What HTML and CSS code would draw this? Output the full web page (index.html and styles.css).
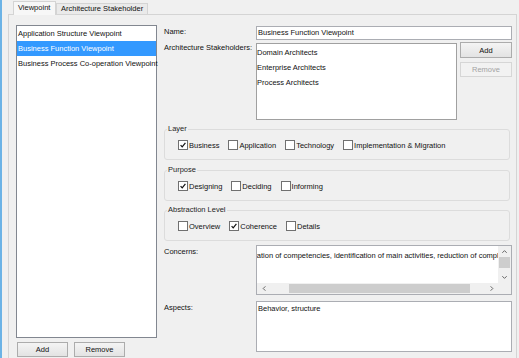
FILE: index.html
```html
<!DOCTYPE html>
<html lang="en">
<head>
  <meta charset="UTF-8" />
  <title>Viewpoints</title>
  <link rel="stylesheet" href="styles.css">
</head>
<body>
  <div class="frame">
    <div class="tabbar">
      <div class="tab active">Viewpoint</div>
      <div class="tab">Architecture Stakeholder</div>
    </div>
    <div class="panel">
      <div class="left">
        <div class="listbox vp-list">
          <div class="item">Application Structure Viewpoint</div>
          <div class="item selected">Business Function Viewpoint</div>
          <div class="item">Business Process Co-operation Viewpoint</div>
        </div>
        <div class="btn-row">
          <button class="btn">Add</button>
          <button class="btn">Remove</button>
        </div>
      </div>

      <div class="right">
        <div class="row name-row">
          <label class="lbl">Name:</label>
          <div class="field">Business Function Viewpoint</div>
        </div>

        <div class="row stake-row">
          <label class="lbl">Architecture Stakeholders:</label>
          <div class="listbox stake-list">
            <div class="item">Domain Architects</div>
            <div class="item">Enterprise Architects</div>
            <div class="item">Process Architects</div>
          </div>
          <div class="side-btns">
            <button class="btn add">Add</button>
            <button class="btn" disabled>Remove</button>
          </div>
        </div>

        <fieldset class="group">
          <legend>Layer</legend>
          <div class="checks">
            <span class="check"><span class="box on"><svg viewBox="0 0 10 10"><path d="M2 5.2 L4 7.4 L8 2.4"/></svg></span>Business</span>
            <span class="check"><span class="box"></span>Application</span>
            <span class="check"><span class="box"></span>Technology</span>
            <span class="check"><span class="box"></span>Implementation &amp; Migration</span>
          </div>
        </fieldset>

        <fieldset class="group purpose">
          <legend>Purpose</legend>
          <div class="checks">
            <span class="check"><span class="box on"><svg viewBox="0 0 10 10"><path d="M2 5.2 L4 7.4 L8 2.4"/></svg></span>Designing</span>
            <span class="check"><span class="box"></span>Deciding</span>
            <span class="check"><span class="box"></span>Informing</span>
          </div>
        </fieldset>

        <fieldset class="group abstraction">
          <legend>Abstraction Level</legend>
          <div class="checks">
            <span class="check"><span class="box"></span>Overview</span>
            <span class="check"><span class="box on"><svg viewBox="0 0 10 10"><path d="M2 5.2 L4 7.4 L8 2.4"/></svg></span>Coherence</span>
            <span class="check"><span class="box"></span>Details</span>
          </div>
        </fieldset>

        <div class="row concerns-row">
          <label class="lbl">Concerns:</label>
          <div class="textbox scrolled">
            <div class="text-clip"><div class="long-text">Identification of competencies, identification of main activities, reduction of complexity</div></div>
            <div class="vscroll">
              <span class="arrow"><svg viewBox="0 0 8 8"><path d="M1.5 5.5 L4 3 L6.5 5.5"/></svg></span>
              <span class="vtrack"><span class="vthumb"></span></span>
              <span class="arrow"><svg viewBox="0 0 8 8"><path d="M1.5 2.5 L4 5 L6.5 2.5"/></svg></span>
            </div>
            <div class="hscroll">
              <span class="arrow"><svg viewBox="0 0 8 8"><path d="M5 1.5 L2.5 4 L5 6.5"/></svg></span>
              <span class="htrack"><span class="hthumb"></span></span>
              <span class="arrow"><svg viewBox="0 0 8 8"><path d="M3 1.5 L5.5 4 L3 6.5"/></svg></span>
            </div>
            <div class="corner"></div>
          </div>
        </div>

        <div class="row aspects-row">
          <label class="lbl">Aspects:</label>
          <div class="textbox">Behavior, structure</div>
        </div>
      </div>
    </div>
  </div>
</body>
</html>
```

FILE: styles.css
```css
html, body {
  margin: 0;
  padding: 0;
  background-color: #f0f0f0;
}
body {
  font-family: "Liberation Sans", Arial, sans-serif;
  font-size: 7.5px;
  color: #111;
  overflow: hidden;
}
.frame {
  height: 358px;
  border-left: 2px solid #6cb3e6;
  padding: 0 2px 0 6px;
}
.tabbar {
  display: flex;
  align-items: flex-end;
  height: 14px;
  padding-left: 5px;
}
.tab {
  border: 1px solid #d4d4d4;
  border-bottom: none;
  height: 10px;
  line-height: 10px;
  padding: 0 4px;
  background: #eaeaea;
}
.tab.active {
  height: 13px;
  line-height: 12px;
  width: 33px;
  background: #f7f7f7;
  margin-bottom: -1px;
  position: relative;
  z-index: 1;
}
.panel {
  display: flex;
  gap: 6px;
  height: 343px;
  border: 1px solid #d4d4d4;
  border-bottom: none;
  padding: 10px 4px 0 7px;
}

/* left column */
.left {
  width: 141px;
}
.listbox {
  background: #fff;
  border: 1px solid #828790;
  box-sizing: border-box;
}
.vp-list {
  height: 313px;
}
.item {
  line-height: 15px;
  height: 15px;
  padding-left: 1px;
  white-space: nowrap;
}
.item.selected {
  background: #3399ff;
  color: #fff;
}
.btn-row {
  display: flex;
  gap: 6px;
  margin: 4px 0 0 1px;
}
.btn {
  font: inherit;
  color: #111;
  width: 51px;
  height: 15px;
  padding: 0;
  border: 1px solid #acacac;
  border-radius: 0;
  background: linear-gradient(#f4f4f4, #e3e3e3);
}
.btn:disabled {
  color: #a3a3a3;
  border-color: #d6d6d6;
  background: #f2f2f2;
}

/* right column */
.right {
  width: 349px;
  display: flex;
  flex-direction: column;
}
.row {
  display: flex;
}
.lbl {
  width: 92px;
  flex: none;
  padding-left: 1px;
  white-space: nowrap;
}
.name-row {
  margin-top: 1px;
}
.name-row .lbl {
  line-height: 11px;
}
.field {
  flex: 1;
  height: 14px;
  box-sizing: border-box;
  line-height: 12px;
  border: 1px solid #abadb3;
  background: #fff;
  padding-left: 1px;
}
.stake-row {
  margin-top: 3px;
}
.stake-row .lbl {
  line-height: 9px;
}
.stake-list {
  width: 201px;
  height: 77px;
  border-color: #a0a0a0;
  padding-top: 1px;
}
.stake-list .item {
  padding-left: 0;
}
.side-btns {
  display: flex;
  flex-direction: column;
  gap: 4px;
  margin: -1px 0 0 3px;
}
.side-btns .btn {
  width: 52px;
}
.side-btns .add {
  height: 16px;
}

/* group boxes */
.group {
  margin: 4px 2px 0 1px;
  padding: 5px 0 8px 2px;
  border: 1px solid #dcdcdc;
  border-radius: 3px;
  min-width: 0;
}
.group legend {
  padding: 0 1px;
  line-height: 10px;
  color: #1e1e1e;
}
.purpose {
  margin-top: 5px;
}
.checks {
  display: flex;
  align-items: center;
  gap: 9px;
  height: 12px;
  margin-left: 11px;
}
.check {
  display: flex;
  align-items: center;
  gap: 1px;
  white-space: nowrap;
}
.box {
  width: 10px;
  height: 10px;
  box-sizing: border-box;
  border: 1px solid #707070;
  background: #fff;
  display: inline-flex;
}
.box svg {
  width: 8px;
  height: 8px;
  fill: none;
  stroke: #111;
  stroke-width: 1.5;
}

/* text areas */
.concerns-row {
  margin-top: 4px;
}
.concerns-row .lbl,
.aspects-row .lbl {
  line-height: 13px;
}
.textbox {
  flex: 1;
  box-sizing: border-box;
  border: 1px solid #abadb3;
  background: #fff;
  height: 51px;
  line-height: 11px;
  padding: 1px 0 0 1px;
}
.aspects-row {
  margin-top: 6px;
}
.textbox.scrolled {
  height: 50px;
  padding: 0;
  display: grid;
  grid-template-columns: 1fr 13px;
  grid-template-rows: 1fr 11px;
}
.text-clip {
  overflow: hidden;
  padding-top: 4px;
}
.long-text {
  white-space: nowrap;
  margin-left: -26px;
}
.vscroll, .hscroll, .corner {
  background: #f0f0f0;
}
.vscroll {
  display: flex;
  flex-direction: column;
}
.hscroll {
  display: flex;
}
.arrow {
  display: flex;
  align-items: center;
  justify-content: center;
  flex: none;
}
.vscroll .arrow {
  height: 11px;
}
.hscroll .arrow {
  width: 14px;
}
.arrow svg {
  width: 7px;
  height: 7px;
  fill: none;
  stroke: #606060;
  stroke-width: 1.1;
}
.vtrack, .htrack {
  flex: 1;
  display: flex;
}
.vthumb {
  width: 11px;
  height: 11px;
  margin-left: 1px;
  background: #cdcdcd;
}
.htrack {
  align-items: center;
}
.hthumb {
  height: 9px;
  width: 181px;
  margin-left: 18px;
  background: #cdcdcd;
}
```
